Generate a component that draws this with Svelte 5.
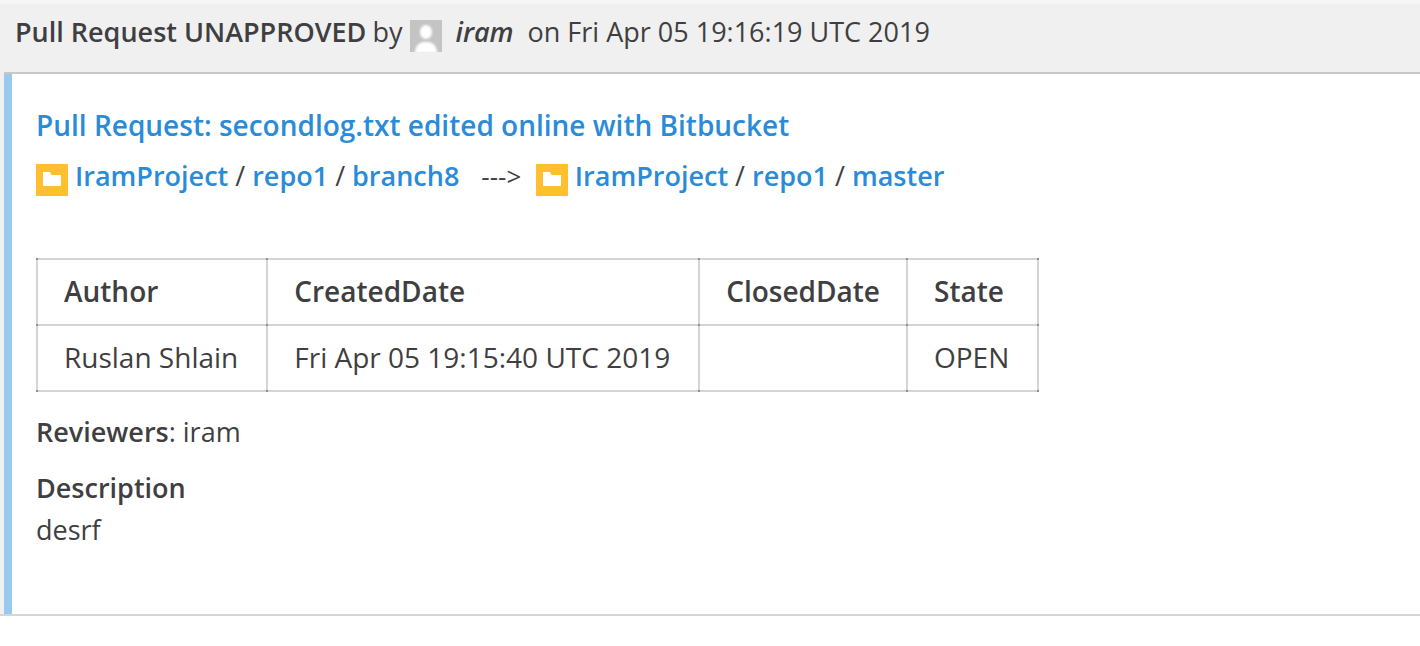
<script>
	const columns = ['Author', 'CreatedDate', 'ClosedDate', 'State'];
	const row = ['Ruslan Shlain', 'Fri Apr 05 19:15:40 UTC 2019', '', 'OPEN'];
</script>

{#snippet folder()}
	<svg class="folder" width="32" height="32" viewBox="0 0 32 32" aria-hidden="true">
		<rect width="32" height="32" fill="#ffbf2f" />
		<path d="M7 8h7l1.500 3H25v11H7z" fill="#fff" />
	</svg>
{/snippet}

<div class="page">
	<div class="activity">
		<div class="heading">
			<span class="action">Pull Request UNAPPROVED</span>
			<span class="by">by</span>
			<svg class="avatar" width="32" height="32" viewBox="0 0 32 32" aria-hidden="true">
				<defs>
					<filter id="soft"><feGaussianBlur stdDeviation="0.9" /></filter>
				</defs>
				<rect width="32" height="32" fill="#c4c4c4" />
				<g fill="#fff" filter="url(#soft)">
					<ellipse cx="16" cy="12" rx="6" ry="7" />
					<path d="M5 33c0-7 4-10 8-11h6c4 1 8 4 8 11z" />
				</g>
			</svg>
			<em class="user">iram</em>
			<span class="date">on Fri Apr 05 19:16:19 UTC 2019</span>
		</div>

		<div class="body">
			<div class="content">
				<h4 class="title"><a href="#pr">Pull Request: secondlog.txt edited online with Bitbucket</a></h4>
				<div class="branches">
					{@render folder()}
					<a href="#p">IramProject</a> / <a href="#r">repo1</a> / <a href="#b">branch8</a>
					<span class="arrow">---&gt;</span>
					{@render folder()}
					<a href="#p">IramProject</a> / <a href="#r">repo1</a> / <a href="#m">master</a>
				</div>

				<table>
					<thead>
						<tr>
							{#each columns as column}
								<th>{column}</th>
							{/each}
						</tr>
					</thead>
					<tbody>
						<tr>
							{#each row as cell}
								<td>{cell}</td>
							{/each}
						</tr>
					</tbody>
				</table>

				<p class="reviewers"><strong>Reviewers</strong>: iram</p>
				<p class="description"><strong>Description</strong>desrf</p>
			</div>
		</div>
	</div>
</div>

<style>
	:global(body) {
		background: #fff;
	}

	.page {
		font-family: 'Open Sans', sans-serif;
		font-size: 27px;
		line-height: 36px;
		color: #3f3f42;
		background: #fff;
		height: 646px;
		border-top: 4px solid #f6f6f6;
		box-sizing: border-box;
	}

	.activity {
		background: #f0f0f0;
		border-bottom: 2px solid #d5d5d5;
	}

	.heading {
		height: 68px;
		padding: 0 0 12px 15px;
		box-sizing: border-box;
		display: flex;
		align-items: center;
		white-space: pre;
	}

	.action {
		font-weight: 600;
	}

	.by {
		margin-left: 6px;
	}

	.avatar {
		margin-left: 8px;
		margin-top: 8px;
	}

	.user {
		font-weight: 600;
		margin-left: 13px;
	}

	.date {
		margin-left: 14px;
	}

	.body {
		margin-left: 4px;
		border-top: 2px solid #c8c8c8;
	}

	.content {
		border-left: 8px solid #9ac9ee;
		background: #fff;
		padding: 31px 24px 0;
		height: 540px;
		box-sizing: border-box;
	}

	a {
		color: #2a8bd8;
		text-decoration: none;
	}

	.title {
		margin: 0;
		font-size: 28px;
		line-height: 40px;
		font-weight: 600;
	}

	.branches {
		margin-top: 11px;
		line-height: 40px;
		white-space: nowrap;
	}

	.branches a {
		font-weight: 600;
	}

	.folder {
		vertical-align: -10px;
	}

	.arrow {
		margin: 0 7.5px 0 15px;
		font-size: 26px;
	}

	table {
		border-collapse: collapse;
		margin-top: 62px;
		font-size: 28px;
	}

	th,
	td {
		position: relative;
		border: 2px solid #d5d5d5;
		padding: 0 28px 2px 26px;
		height: 66px;
		text-align: left;
		white-space: nowrap;
		box-sizing: border-box;
	}

	th:nth-child(3),
	td:nth-child(3) {
		padding-right: 26px;
	}

	/* the rule crossings come out darker in the reference */
	th::before,
	td::before {
		content: '';
		position: absolute;
		inset: -2px;
		pointer-events: none;
		background:
			linear-gradient(#8e8e8e, #8e8e8e) 0 0 / 2px 2px no-repeat,
			linear-gradient(#8e8e8e, #8e8e8e) 100% 0 / 2px 2px no-repeat,
			linear-gradient(#8e8e8e, #8e8e8e) 0 100% / 2px 2px no-repeat,
			linear-gradient(#8e8e8e, #8e8e8e) 100% 100% / 2px 2px no-repeat;
	}

	th {
		font-weight: 600;
	}

	.reviewers {
		margin: 22px 0 0;
	}

	.description {
		margin: 20px 0 0;
	}

	strong {
		font-weight: 600;
	}

	.description strong {
		display: block;
		margin-bottom: 6px;
	}
</style>
